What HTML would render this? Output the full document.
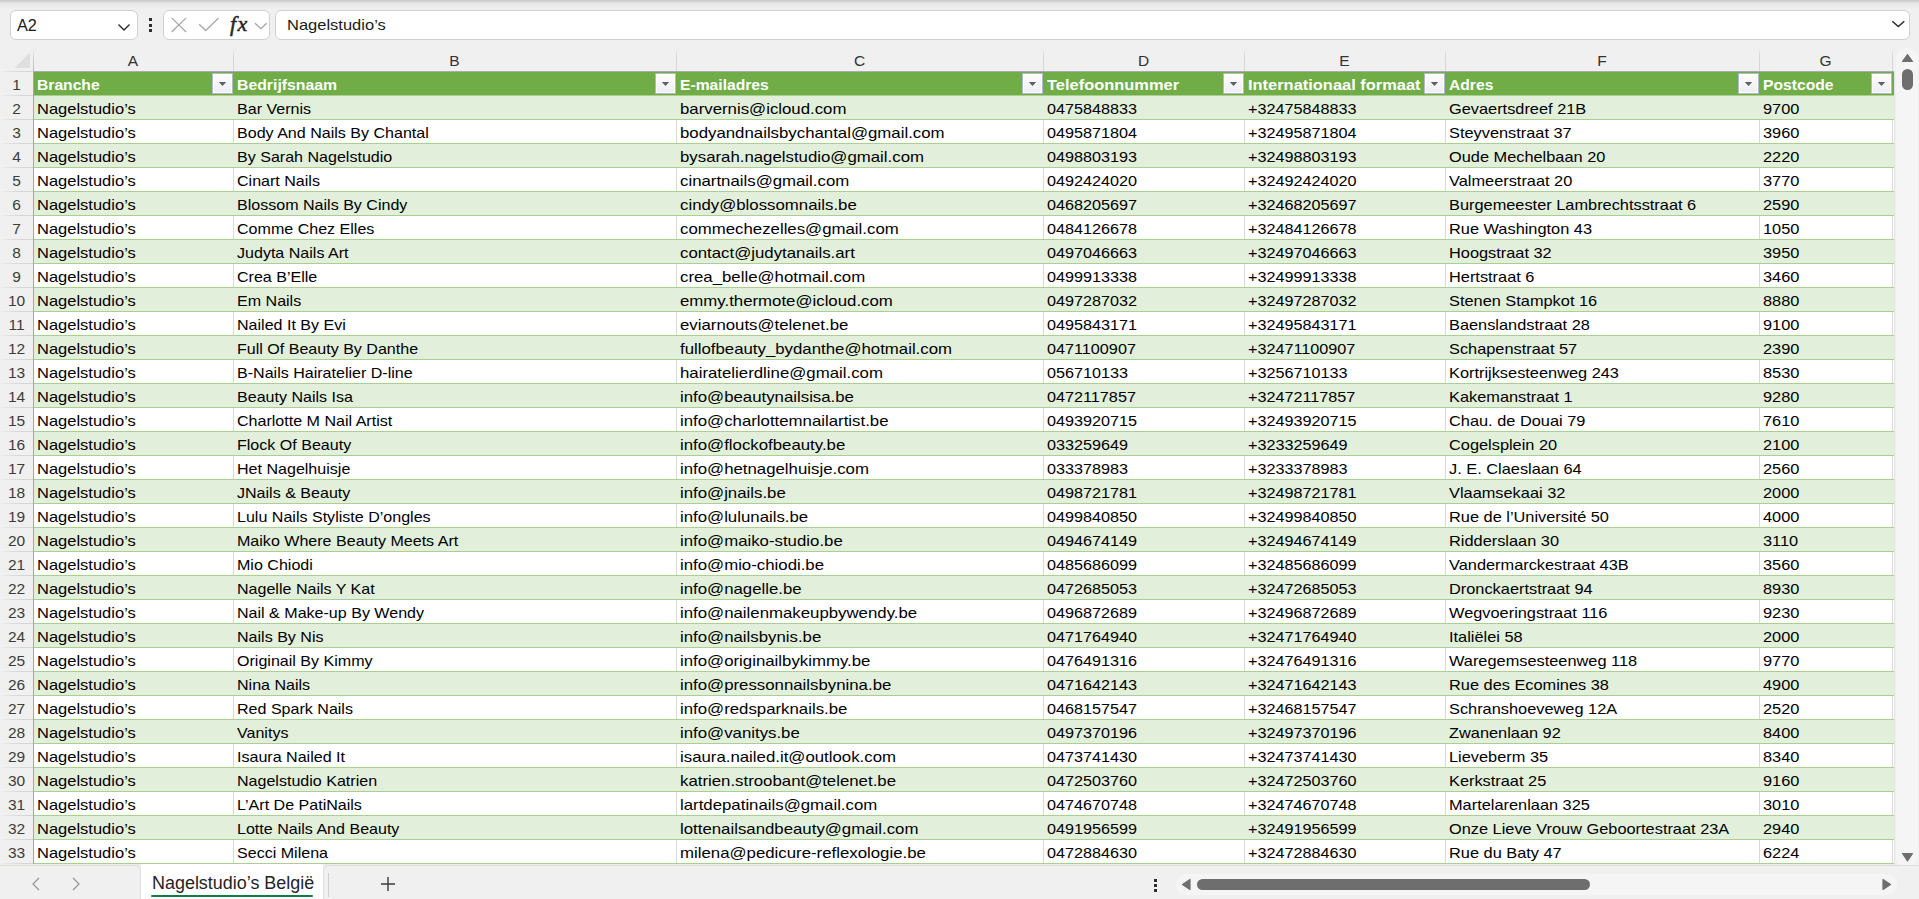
<!DOCTYPE html>
<html><head><meta charset="utf-8"><style>
*{margin:0;padding:0;box-sizing:border-box}
html,body{width:1919px;height:899px;overflow:hidden;background:#f0f0f0;font-family:"Liberation Sans",sans-serif;position:relative}
.a{position:absolute}
.t{position:absolute;white-space:nowrap;font-size:15px;line-height:24px;color:#000;transform-origin:0 0}
.hb{position:absolute;white-space:nowrap;font-size:15.5px;line-height:24px;color:#fff;font-weight:bold;transform-origin:0 0;transform:scaleX(1.06)}
.box{position:absolute;background:#fff;border:1px solid #d0d0d0;border-radius:6px}
.cl{position:absolute;font-size:15.5px;line-height:23px;color:#333;text-align:center}
.rn{position:absolute;left:0;width:33px;font-size:15.5px;line-height:24px;color:#3c3c3c;text-align:center}
.fb{position:absolute;width:21px;height:21px;border:1px solid #b6b6c6;background:linear-gradient(#fdfdfe,#eceef3);box-shadow:inset 0 0 0 1px #fff}
.fb svg{position:absolute;left:0;top:0}
.rs{position:absolute;left:0;width:33px;height:1px;background:linear-gradient(90deg,rgba(214,214,214,0),rgba(214,214,214,.6) 10px,#d6d6d6 22px)}
</style></head><body>

<div class="a" style="left:0;top:0;width:1919px;height:9px;background:linear-gradient(#c4c4c4,#e6e6e6 35%,#f0f0f0)"></div>
<div class="box" style="left:10px;top:10px;width:128px;height:30px"></div>
<div class="a" style="left:17px;top:13px;font-size:16.3px;line-height:24px;color:#1a1a1a">A2</div>
<svg class="a" style="left:116px;top:20px" width="16" height="14"><polyline points="2.5,4.5 8,10 13.5,4.5" fill="none" stroke="#2a2a2a" stroke-width="1.4"/></svg>
<div class="a" style="left:149px;top:18px;width:3px;height:3px;background:#2e2e2e"></div>
<div class="a" style="left:149px;top:23.5px;width:3px;height:3px;background:#2e2e2e"></div>
<div class="a" style="left:149px;top:29px;width:3px;height:3px;background:#2e2e2e"></div>
<div class="box" style="left:163px;top:10px;width:107px;height:30px"></div>
<svg class="a" style="left:163px;top:10px" width="107" height="30"><path d="M8.7 7.9 L23.1 22 M23.1 7.9 L8.7 22" stroke="#a6a6a6" stroke-width="1.3" fill="none"/><polyline points="36.2,14.2 42.7,20.5 55.7,7.9" stroke="#a6a6a6" stroke-width="1.3" fill="none"/><polyline points="92,13.3 98,18.7 103.6,13.3" stroke="#a0a0a0" stroke-width="1.2" fill="none"/></svg>
<div class="a" style="left:230px;top:10px;font-family:'Liberation Serif',serif;font-style:italic;font-size:22px;line-height:28px;color:#262626;-webkit-text-stroke:0.5px #262626;letter-spacing:1.5px">fx</div>
<div class="box" style="left:275px;top:10px;width:1635px;height:30px"></div>
<div class="a" style="left:287px;top:13px;font-size:15px;line-height:24px;color:#1a1a1a;transform-origin:0 0;transform:scaleX(1.10)">Nagelstudio’s</div>
<svg class="a" style="left:1890px;top:18px" width="16" height="12"><polyline points="2.3,3.2 8.3,8.6 14.3,3.2" fill="none" stroke="#2a2a2a" stroke-width="1.5"/></svg>
<svg class="a" style="left:0;top:48px" width="33" height="23"><polygon points="14.5,20 30,20 30,4.5" fill="#dfdfdf"/></svg>
<div class="cl" style="left:33px;top:49px;width:200px">A</div>
<div class="cl" style="left:233px;top:49px;width:443px">B</div>
<div class="cl" style="left:676px;top:49px;width:367px">C</div>
<div class="cl" style="left:1043px;top:49px;width:201px">D</div>
<div class="cl" style="left:1244px;top:49px;width:201px">E</div>
<div class="cl" style="left:1445px;top:49px;width:314px">F</div>
<div class="cl" style="left:1759px;top:49px;width:133px">G</div>
<div class="a" style="left:233px;top:48px;width:1px;height:23px;background:linear-gradient(rgba(214,214,214,0),#d6d6d6 8px)"></div>
<div class="a" style="left:676px;top:48px;width:1px;height:23px;background:linear-gradient(rgba(214,214,214,0),#d6d6d6 8px)"></div>
<div class="a" style="left:1043px;top:48px;width:1px;height:23px;background:linear-gradient(rgba(214,214,214,0),#d6d6d6 8px)"></div>
<div class="a" style="left:1244px;top:48px;width:1px;height:23px;background:linear-gradient(rgba(214,214,214,0),#d6d6d6 8px)"></div>
<div class="a" style="left:1445px;top:48px;width:1px;height:23px;background:linear-gradient(rgba(214,214,214,0),#d6d6d6 8px)"></div>
<div class="a" style="left:1759px;top:48px;width:1px;height:23px;background:linear-gradient(rgba(214,214,214,0),#d6d6d6 8px)"></div>
<div class="a" style="left:1892px;top:48px;width:1px;height:23px;background:linear-gradient(rgba(214,214,214,0),#d6d6d6 8px)"></div>
<div class="rs" style="top:71px"></div>
<div class="a" style="left:33px;top:71px;width:1861px;height:1px;background:#aaaab0"></div>
<div class="a" style="left:33px;top:48px;width:1px;height:24px;background:linear-gradient(rgba(200,200,200,0),#d0d0d0 10px,#b8b8b8)"></div>
<div class="a" style="left:33px;top:72px;width:1px;height:792px;background:#a6a6a6"></div>
<div class="a" style="left:34px;top:72px;width:1860px;height:24px;background:#70ad47"></div>
<div class="a" style="left:34px;top:95px;width:1860px;height:1px;background:#a9d08e"></div>
<div class="rs" style="top:95px"></div>
<div class="rn" style="top:73px">1</div>
<div class="hb" style="left:37px;top:73px;transform:scaleX(1.01)">Branche</div>
<div class="fb" style="left:212px;top:73px"><svg width="19" height="19"><polygon points="5.8,7.9 13.2,7.9 9.5,12.1" fill="#606060"/></svg></div>
<div class="hb" style="left:237px;top:73px;transform:scaleX(1.02)">Bedrijfsnaam</div>
<div class="fb" style="left:655px;top:73px"><svg width="19" height="19"><polygon points="5.8,7.9 13.2,7.9 9.5,12.1" fill="#606060"/></svg></div>
<div class="hb" style="left:680px;top:73px;transform:scaleX(1.01)">E-mailadres</div>
<div class="fb" style="left:1022px;top:73px"><svg width="19" height="19"><polygon points="5.8,7.9 13.2,7.9 9.5,12.1" fill="#606060"/></svg></div>
<div class="hb" style="left:1047px;top:73px;transform:scaleX(1.06)">Telefoonnummer</div>
<div class="fb" style="left:1223px;top:73px"><svg width="19" height="19"><polygon points="5.8,7.9 13.2,7.9 9.5,12.1" fill="#606060"/></svg></div>
<div class="hb" style="left:1248px;top:73px;transform:scaleX(1.06)">Internationaal formaat</div>
<div class="fb" style="left:1424px;top:73px"><svg width="19" height="19"><polygon points="5.8,7.9 13.2,7.9 9.5,12.1" fill="#606060"/></svg></div>
<div class="hb" style="left:1449px;top:73px;transform:scaleX(1.01)">Adres</div>
<div class="fb" style="left:1738px;top:73px"><svg width="19" height="19"><polygon points="5.8,7.9 13.2,7.9 9.5,12.1" fill="#606060"/></svg></div>
<div class="hb" style="left:1763px;top:73px;transform:scaleX(1.01)">Postcode</div>
<div class="fb" style="left:1871px;top:73px"><svg width="19" height="19"><polygon points="5.8,7.9 13.2,7.9 9.5,12.1" fill="#606060"/></svg></div>
<div class="a" style="left:34px;top:96px;width:1860px;height:24px;background:#e2efda"></div>
<div class="a" style="left:34px;top:119px;width:1860px;height:1px;background:#a9d08e"></div>
<div class="rs" style="top:119px"></div>
<div class="rn" style="top:97px">2</div>
<div class="t" style="left:37px;top:97px;font-size:15px;transform:scaleX(1.1000)">Nagelstudio’s</div>
<div class="t" style="left:237px;top:97px;font-size:15px;transform:scaleX(1.0700)">Bar Vernis</div>
<div class="t" style="left:680px;top:97px;font-size:15px;transform:scaleX(1.1200)">barvernis@icloud.com</div>
<div class="t" style="left:1047px;top:97px;font-size:15.5px;transform:scaleX(1.0452)">0475848833</div>
<div class="t" style="left:1248px;top:97px;font-size:15.5px;transform:scaleX(1.0452)">+32475848833</div>
<div class="t" style="left:1449px;top:97px;font-size:15px;transform:scaleX(1.0900)">Gevaertsdreef 21B</div>
<div class="t" style="left:1763px;top:97px;font-size:15.5px;transform:scaleX(1.0548)">9700</div>
<div class="a" style="left:34px;top:120px;width:1860px;height:24px;background:#ffffff"></div>
<div class="a" style="left:233px;top:120px;width:1px;height:24px;background:#d9d9d9"></div>
<div class="a" style="left:676px;top:120px;width:1px;height:24px;background:#d9d9d9"></div>
<div class="a" style="left:1043px;top:120px;width:1px;height:24px;background:#d9d9d9"></div>
<div class="a" style="left:1244px;top:120px;width:1px;height:24px;background:#d9d9d9"></div>
<div class="a" style="left:1445px;top:120px;width:1px;height:24px;background:#d9d9d9"></div>
<div class="a" style="left:1759px;top:120px;width:1px;height:24px;background:#d9d9d9"></div>
<div class="a" style="left:1892px;top:120px;width:1px;height:24px;background:#d9d9d9"></div>
<div class="a" style="left:34px;top:143px;width:1860px;height:1px;background:#a9d08e"></div>
<div class="rs" style="top:143px"></div>
<div class="rn" style="top:121px">3</div>
<div class="t" style="left:37px;top:121px;font-size:15px;transform:scaleX(1.1000)">Nagelstudio’s</div>
<div class="t" style="left:237px;top:121px;font-size:15px;transform:scaleX(1.0700)">Body And Nails By Chantal</div>
<div class="t" style="left:680px;top:121px;font-size:15px;transform:scaleX(1.1200)">bodyandnailsbychantal@gmail.com</div>
<div class="t" style="left:1047px;top:121px;font-size:15.5px;transform:scaleX(1.0452)">0495871804</div>
<div class="t" style="left:1248px;top:121px;font-size:15.5px;transform:scaleX(1.0452)">+32495871804</div>
<div class="t" style="left:1449px;top:121px;font-size:15px;transform:scaleX(1.0900)">Steyvenstraat 37</div>
<div class="t" style="left:1763px;top:121px;font-size:15.5px;transform:scaleX(1.0548)">3960</div>
<div class="a" style="left:34px;top:144px;width:1860px;height:24px;background:#e2efda"></div>
<div class="a" style="left:34px;top:167px;width:1860px;height:1px;background:#a9d08e"></div>
<div class="rs" style="top:167px"></div>
<div class="rn" style="top:145px">4</div>
<div class="t" style="left:37px;top:145px;font-size:15px;transform:scaleX(1.1000)">Nagelstudio’s</div>
<div class="t" style="left:237px;top:145px;font-size:15px;transform:scaleX(1.0700)">By Sarah Nagelstudio</div>
<div class="t" style="left:680px;top:145px;font-size:15px;transform:scaleX(1.1200)">bysarah.nagelstudio@gmail.com</div>
<div class="t" style="left:1047px;top:145px;font-size:15.5px;transform:scaleX(1.0452)">0498803193</div>
<div class="t" style="left:1248px;top:145px;font-size:15.5px;transform:scaleX(1.0452)">+32498803193</div>
<div class="t" style="left:1449px;top:145px;font-size:15px;transform:scaleX(1.0900)">Oude Mechelbaan 20</div>
<div class="t" style="left:1763px;top:145px;font-size:15.5px;transform:scaleX(1.0548)">2220</div>
<div class="a" style="left:34px;top:168px;width:1860px;height:24px;background:#ffffff"></div>
<div class="a" style="left:233px;top:168px;width:1px;height:24px;background:#d9d9d9"></div>
<div class="a" style="left:676px;top:168px;width:1px;height:24px;background:#d9d9d9"></div>
<div class="a" style="left:1043px;top:168px;width:1px;height:24px;background:#d9d9d9"></div>
<div class="a" style="left:1244px;top:168px;width:1px;height:24px;background:#d9d9d9"></div>
<div class="a" style="left:1445px;top:168px;width:1px;height:24px;background:#d9d9d9"></div>
<div class="a" style="left:1759px;top:168px;width:1px;height:24px;background:#d9d9d9"></div>
<div class="a" style="left:1892px;top:168px;width:1px;height:24px;background:#d9d9d9"></div>
<div class="a" style="left:34px;top:191px;width:1860px;height:1px;background:#a9d08e"></div>
<div class="rs" style="top:191px"></div>
<div class="rn" style="top:169px">5</div>
<div class="t" style="left:37px;top:169px;font-size:15px;transform:scaleX(1.1000)">Nagelstudio’s</div>
<div class="t" style="left:237px;top:169px;font-size:15px;transform:scaleX(1.0700)">Cinart Nails</div>
<div class="t" style="left:680px;top:169px;font-size:15px;transform:scaleX(1.1200)">cinartnails@gmail.com</div>
<div class="t" style="left:1047px;top:169px;font-size:15.5px;transform:scaleX(1.0452)">0492424020</div>
<div class="t" style="left:1248px;top:169px;font-size:15.5px;transform:scaleX(1.0452)">+32492424020</div>
<div class="t" style="left:1449px;top:169px;font-size:15px;transform:scaleX(1.0900)">Valmeerstraat 20</div>
<div class="t" style="left:1763px;top:169px;font-size:15.5px;transform:scaleX(1.0548)">3770</div>
<div class="a" style="left:34px;top:192px;width:1860px;height:24px;background:#e2efda"></div>
<div class="a" style="left:34px;top:215px;width:1860px;height:1px;background:#a9d08e"></div>
<div class="rs" style="top:215px"></div>
<div class="rn" style="top:193px">6</div>
<div class="t" style="left:37px;top:193px;font-size:15px;transform:scaleX(1.1000)">Nagelstudio’s</div>
<div class="t" style="left:237px;top:193px;font-size:15px;transform:scaleX(1.0700)">Blossom Nails By Cindy</div>
<div class="t" style="left:680px;top:193px;font-size:15px;transform:scaleX(1.1200)">cindy@blossomnails.be</div>
<div class="t" style="left:1047px;top:193px;font-size:15.5px;transform:scaleX(1.0452)">0468205697</div>
<div class="t" style="left:1248px;top:193px;font-size:15.5px;transform:scaleX(1.0452)">+32468205697</div>
<div class="t" style="left:1449px;top:193px;font-size:15px;transform:scaleX(1.0900)">Burgemeester Lambrechtsstraat 6</div>
<div class="t" style="left:1763px;top:193px;font-size:15.5px;transform:scaleX(1.0548)">2590</div>
<div class="a" style="left:34px;top:216px;width:1860px;height:24px;background:#ffffff"></div>
<div class="a" style="left:233px;top:216px;width:1px;height:24px;background:#d9d9d9"></div>
<div class="a" style="left:676px;top:216px;width:1px;height:24px;background:#d9d9d9"></div>
<div class="a" style="left:1043px;top:216px;width:1px;height:24px;background:#d9d9d9"></div>
<div class="a" style="left:1244px;top:216px;width:1px;height:24px;background:#d9d9d9"></div>
<div class="a" style="left:1445px;top:216px;width:1px;height:24px;background:#d9d9d9"></div>
<div class="a" style="left:1759px;top:216px;width:1px;height:24px;background:#d9d9d9"></div>
<div class="a" style="left:1892px;top:216px;width:1px;height:24px;background:#d9d9d9"></div>
<div class="a" style="left:34px;top:239px;width:1860px;height:1px;background:#a9d08e"></div>
<div class="rs" style="top:239px"></div>
<div class="rn" style="top:217px">7</div>
<div class="t" style="left:37px;top:217px;font-size:15px;transform:scaleX(1.1000)">Nagelstudio’s</div>
<div class="t" style="left:237px;top:217px;font-size:15px;transform:scaleX(1.0700)">Comme Chez Elles</div>
<div class="t" style="left:680px;top:217px;font-size:15px;transform:scaleX(1.1200)">commechezelles@gmail.com</div>
<div class="t" style="left:1047px;top:217px;font-size:15.5px;transform:scaleX(1.0452)">0484126678</div>
<div class="t" style="left:1248px;top:217px;font-size:15.5px;transform:scaleX(1.0452)">+32484126678</div>
<div class="t" style="left:1449px;top:217px;font-size:15px;transform:scaleX(1.0900)">Rue Washington 43</div>
<div class="t" style="left:1763px;top:217px;font-size:15.5px;transform:scaleX(1.0548)">1050</div>
<div class="a" style="left:34px;top:240px;width:1860px;height:24px;background:#e2efda"></div>
<div class="a" style="left:34px;top:263px;width:1860px;height:1px;background:#a9d08e"></div>
<div class="rs" style="top:263px"></div>
<div class="rn" style="top:241px">8</div>
<div class="t" style="left:37px;top:241px;font-size:15px;transform:scaleX(1.1000)">Nagelstudio’s</div>
<div class="t" style="left:237px;top:241px;font-size:15px;transform:scaleX(1.0700)">Judyta Nails Art</div>
<div class="t" style="left:680px;top:241px;font-size:15px;transform:scaleX(1.1200)">contact@judytanails.art</div>
<div class="t" style="left:1047px;top:241px;font-size:15.5px;transform:scaleX(1.0452)">0497046663</div>
<div class="t" style="left:1248px;top:241px;font-size:15.5px;transform:scaleX(1.0452)">+32497046663</div>
<div class="t" style="left:1449px;top:241px;font-size:15px;transform:scaleX(1.0900)">Hoogstraat 32</div>
<div class="t" style="left:1763px;top:241px;font-size:15.5px;transform:scaleX(1.0548)">3950</div>
<div class="a" style="left:34px;top:264px;width:1860px;height:24px;background:#ffffff"></div>
<div class="a" style="left:233px;top:264px;width:1px;height:24px;background:#d9d9d9"></div>
<div class="a" style="left:676px;top:264px;width:1px;height:24px;background:#d9d9d9"></div>
<div class="a" style="left:1043px;top:264px;width:1px;height:24px;background:#d9d9d9"></div>
<div class="a" style="left:1244px;top:264px;width:1px;height:24px;background:#d9d9d9"></div>
<div class="a" style="left:1445px;top:264px;width:1px;height:24px;background:#d9d9d9"></div>
<div class="a" style="left:1759px;top:264px;width:1px;height:24px;background:#d9d9d9"></div>
<div class="a" style="left:1892px;top:264px;width:1px;height:24px;background:#d9d9d9"></div>
<div class="a" style="left:34px;top:287px;width:1860px;height:1px;background:#a9d08e"></div>
<div class="rs" style="top:287px"></div>
<div class="rn" style="top:265px">9</div>
<div class="t" style="left:37px;top:265px;font-size:15px;transform:scaleX(1.1000)">Nagelstudio’s</div>
<div class="t" style="left:237px;top:265px;font-size:15px;transform:scaleX(1.0700)">Crea B’Elle</div>
<div class="t" style="left:680px;top:265px;font-size:15px;transform:scaleX(1.1200)">crea_belle@hotmail.com</div>
<div class="t" style="left:1047px;top:265px;font-size:15.5px;transform:scaleX(1.0452)">0499913338</div>
<div class="t" style="left:1248px;top:265px;font-size:15.5px;transform:scaleX(1.0452)">+32499913338</div>
<div class="t" style="left:1449px;top:265px;font-size:15px;transform:scaleX(1.0900)">Hertstraat 6</div>
<div class="t" style="left:1763px;top:265px;font-size:15.5px;transform:scaleX(1.0548)">3460</div>
<div class="a" style="left:34px;top:288px;width:1860px;height:24px;background:#e2efda"></div>
<div class="a" style="left:34px;top:311px;width:1860px;height:1px;background:#a9d08e"></div>
<div class="rs" style="top:311px"></div>
<div class="rn" style="top:289px">10</div>
<div class="t" style="left:37px;top:289px;font-size:15px;transform:scaleX(1.1000)">Nagelstudio’s</div>
<div class="t" style="left:237px;top:289px;font-size:15px;transform:scaleX(1.0700)">Em Nails</div>
<div class="t" style="left:680px;top:289px;font-size:15px;transform:scaleX(1.1200)">emmy.thermote@icloud.com</div>
<div class="t" style="left:1047px;top:289px;font-size:15.5px;transform:scaleX(1.0452)">0497287032</div>
<div class="t" style="left:1248px;top:289px;font-size:15.5px;transform:scaleX(1.0452)">+32497287032</div>
<div class="t" style="left:1449px;top:289px;font-size:15px;transform:scaleX(1.0900)">Stenen Stampkot 16</div>
<div class="t" style="left:1763px;top:289px;font-size:15.5px;transform:scaleX(1.0548)">8880</div>
<div class="a" style="left:34px;top:312px;width:1860px;height:24px;background:#ffffff"></div>
<div class="a" style="left:233px;top:312px;width:1px;height:24px;background:#d9d9d9"></div>
<div class="a" style="left:676px;top:312px;width:1px;height:24px;background:#d9d9d9"></div>
<div class="a" style="left:1043px;top:312px;width:1px;height:24px;background:#d9d9d9"></div>
<div class="a" style="left:1244px;top:312px;width:1px;height:24px;background:#d9d9d9"></div>
<div class="a" style="left:1445px;top:312px;width:1px;height:24px;background:#d9d9d9"></div>
<div class="a" style="left:1759px;top:312px;width:1px;height:24px;background:#d9d9d9"></div>
<div class="a" style="left:1892px;top:312px;width:1px;height:24px;background:#d9d9d9"></div>
<div class="a" style="left:34px;top:335px;width:1860px;height:1px;background:#a9d08e"></div>
<div class="rs" style="top:335px"></div>
<div class="rn" style="top:313px">11</div>
<div class="t" style="left:37px;top:313px;font-size:15px;transform:scaleX(1.1000)">Nagelstudio’s</div>
<div class="t" style="left:237px;top:313px;font-size:15px;transform:scaleX(1.0700)">Nailed It By Evi</div>
<div class="t" style="left:680px;top:313px;font-size:15px;transform:scaleX(1.1200)">eviarnouts@telenet.be</div>
<div class="t" style="left:1047px;top:313px;font-size:15.5px;transform:scaleX(1.0452)">0495843171</div>
<div class="t" style="left:1248px;top:313px;font-size:15.5px;transform:scaleX(1.0452)">+32495843171</div>
<div class="t" style="left:1449px;top:313px;font-size:15px;transform:scaleX(1.0900)">Baenslandstraat 28</div>
<div class="t" style="left:1763px;top:313px;font-size:15.5px;transform:scaleX(1.0548)">9100</div>
<div class="a" style="left:34px;top:336px;width:1860px;height:24px;background:#e2efda"></div>
<div class="a" style="left:34px;top:359px;width:1860px;height:1px;background:#a9d08e"></div>
<div class="rs" style="top:359px"></div>
<div class="rn" style="top:337px">12</div>
<div class="t" style="left:37px;top:337px;font-size:15px;transform:scaleX(1.1000)">Nagelstudio’s</div>
<div class="t" style="left:237px;top:337px;font-size:15px;transform:scaleX(1.0700)">Full Of Beauty By Danthe</div>
<div class="t" style="left:680px;top:337px;font-size:15px;transform:scaleX(1.1200)">fullofbeauty_bydanthe@hotmail.com</div>
<div class="t" style="left:1047px;top:337px;font-size:15.5px;transform:scaleX(1.0452)">0471100907</div>
<div class="t" style="left:1248px;top:337px;font-size:15.5px;transform:scaleX(1.0452)">+32471100907</div>
<div class="t" style="left:1449px;top:337px;font-size:15px;transform:scaleX(1.0900)">Schapenstraat 57</div>
<div class="t" style="left:1763px;top:337px;font-size:15.5px;transform:scaleX(1.0548)">2390</div>
<div class="a" style="left:34px;top:360px;width:1860px;height:24px;background:#ffffff"></div>
<div class="a" style="left:233px;top:360px;width:1px;height:24px;background:#d9d9d9"></div>
<div class="a" style="left:676px;top:360px;width:1px;height:24px;background:#d9d9d9"></div>
<div class="a" style="left:1043px;top:360px;width:1px;height:24px;background:#d9d9d9"></div>
<div class="a" style="left:1244px;top:360px;width:1px;height:24px;background:#d9d9d9"></div>
<div class="a" style="left:1445px;top:360px;width:1px;height:24px;background:#d9d9d9"></div>
<div class="a" style="left:1759px;top:360px;width:1px;height:24px;background:#d9d9d9"></div>
<div class="a" style="left:1892px;top:360px;width:1px;height:24px;background:#d9d9d9"></div>
<div class="a" style="left:34px;top:383px;width:1860px;height:1px;background:#a9d08e"></div>
<div class="rs" style="top:383px"></div>
<div class="rn" style="top:361px">13</div>
<div class="t" style="left:37px;top:361px;font-size:15px;transform:scaleX(1.1000)">Nagelstudio’s</div>
<div class="t" style="left:237px;top:361px;font-size:15px;transform:scaleX(1.0700)">B-Nails Hairatelier D-line</div>
<div class="t" style="left:680px;top:361px;font-size:15px;transform:scaleX(1.1200)">hairatelierdline@gmail.com</div>
<div class="t" style="left:1047px;top:361px;font-size:15.5px;transform:scaleX(1.0452)">056710133</div>
<div class="t" style="left:1248px;top:361px;font-size:15.5px;transform:scaleX(1.0452)">+3256710133</div>
<div class="t" style="left:1449px;top:361px;font-size:15px;transform:scaleX(1.0900)">Kortrijksesteenweg 243</div>
<div class="t" style="left:1763px;top:361px;font-size:15.5px;transform:scaleX(1.0548)">8530</div>
<div class="a" style="left:34px;top:384px;width:1860px;height:24px;background:#e2efda"></div>
<div class="a" style="left:34px;top:407px;width:1860px;height:1px;background:#a9d08e"></div>
<div class="rs" style="top:407px"></div>
<div class="rn" style="top:385px">14</div>
<div class="t" style="left:37px;top:385px;font-size:15px;transform:scaleX(1.1000)">Nagelstudio’s</div>
<div class="t" style="left:237px;top:385px;font-size:15px;transform:scaleX(1.0700)">Beauty Nails Isa</div>
<div class="t" style="left:680px;top:385px;font-size:15px;transform:scaleX(1.1200)">info@beautynailsisa.be</div>
<div class="t" style="left:1047px;top:385px;font-size:15.5px;transform:scaleX(1.0452)">0472117857</div>
<div class="t" style="left:1248px;top:385px;font-size:15.5px;transform:scaleX(1.0452)">+32472117857</div>
<div class="t" style="left:1449px;top:385px;font-size:15px;transform:scaleX(1.0900)">Kakemanstraat 1</div>
<div class="t" style="left:1763px;top:385px;font-size:15.5px;transform:scaleX(1.0548)">9280</div>
<div class="a" style="left:34px;top:408px;width:1860px;height:24px;background:#ffffff"></div>
<div class="a" style="left:233px;top:408px;width:1px;height:24px;background:#d9d9d9"></div>
<div class="a" style="left:676px;top:408px;width:1px;height:24px;background:#d9d9d9"></div>
<div class="a" style="left:1043px;top:408px;width:1px;height:24px;background:#d9d9d9"></div>
<div class="a" style="left:1244px;top:408px;width:1px;height:24px;background:#d9d9d9"></div>
<div class="a" style="left:1445px;top:408px;width:1px;height:24px;background:#d9d9d9"></div>
<div class="a" style="left:1759px;top:408px;width:1px;height:24px;background:#d9d9d9"></div>
<div class="a" style="left:1892px;top:408px;width:1px;height:24px;background:#d9d9d9"></div>
<div class="a" style="left:34px;top:431px;width:1860px;height:1px;background:#a9d08e"></div>
<div class="rs" style="top:431px"></div>
<div class="rn" style="top:409px">15</div>
<div class="t" style="left:37px;top:409px;font-size:15px;transform:scaleX(1.1000)">Nagelstudio’s</div>
<div class="t" style="left:237px;top:409px;font-size:15px;transform:scaleX(1.0700)">Charlotte M Nail Artist</div>
<div class="t" style="left:680px;top:409px;font-size:15px;transform:scaleX(1.1200)">info@charlottemnailartist.be</div>
<div class="t" style="left:1047px;top:409px;font-size:15.5px;transform:scaleX(1.0452)">0493920715</div>
<div class="t" style="left:1248px;top:409px;font-size:15.5px;transform:scaleX(1.0452)">+32493920715</div>
<div class="t" style="left:1449px;top:409px;font-size:15px;transform:scaleX(1.0900)">Chau. de Douai 79</div>
<div class="t" style="left:1763px;top:409px;font-size:15.5px;transform:scaleX(1.0548)">7610</div>
<div class="a" style="left:34px;top:432px;width:1860px;height:24px;background:#e2efda"></div>
<div class="a" style="left:34px;top:455px;width:1860px;height:1px;background:#a9d08e"></div>
<div class="rs" style="top:455px"></div>
<div class="rn" style="top:433px">16</div>
<div class="t" style="left:37px;top:433px;font-size:15px;transform:scaleX(1.1000)">Nagelstudio’s</div>
<div class="t" style="left:237px;top:433px;font-size:15px;transform:scaleX(1.0700)">Flock Of Beauty</div>
<div class="t" style="left:680px;top:433px;font-size:15px;transform:scaleX(1.1200)">info@flockofbeauty.be</div>
<div class="t" style="left:1047px;top:433px;font-size:15.5px;transform:scaleX(1.0452)">033259649</div>
<div class="t" style="left:1248px;top:433px;font-size:15.5px;transform:scaleX(1.0452)">+3233259649</div>
<div class="t" style="left:1449px;top:433px;font-size:15px;transform:scaleX(1.0900)">Cogelsplein 20</div>
<div class="t" style="left:1763px;top:433px;font-size:15.5px;transform:scaleX(1.0548)">2100</div>
<div class="a" style="left:34px;top:456px;width:1860px;height:24px;background:#ffffff"></div>
<div class="a" style="left:233px;top:456px;width:1px;height:24px;background:#d9d9d9"></div>
<div class="a" style="left:676px;top:456px;width:1px;height:24px;background:#d9d9d9"></div>
<div class="a" style="left:1043px;top:456px;width:1px;height:24px;background:#d9d9d9"></div>
<div class="a" style="left:1244px;top:456px;width:1px;height:24px;background:#d9d9d9"></div>
<div class="a" style="left:1445px;top:456px;width:1px;height:24px;background:#d9d9d9"></div>
<div class="a" style="left:1759px;top:456px;width:1px;height:24px;background:#d9d9d9"></div>
<div class="a" style="left:1892px;top:456px;width:1px;height:24px;background:#d9d9d9"></div>
<div class="a" style="left:34px;top:479px;width:1860px;height:1px;background:#a9d08e"></div>
<div class="rs" style="top:479px"></div>
<div class="rn" style="top:457px">17</div>
<div class="t" style="left:37px;top:457px;font-size:15px;transform:scaleX(1.1000)">Nagelstudio’s</div>
<div class="t" style="left:237px;top:457px;font-size:15px;transform:scaleX(1.0700)">Het Nagelhuisje</div>
<div class="t" style="left:680px;top:457px;font-size:15px;transform:scaleX(1.1200)">info@hetnagelhuisje.com</div>
<div class="t" style="left:1047px;top:457px;font-size:15.5px;transform:scaleX(1.0452)">033378983</div>
<div class="t" style="left:1248px;top:457px;font-size:15.5px;transform:scaleX(1.0452)">+3233378983</div>
<div class="t" style="left:1449px;top:457px;font-size:15px;transform:scaleX(1.0900)">J. E. Claeslaan 64</div>
<div class="t" style="left:1763px;top:457px;font-size:15.5px;transform:scaleX(1.0548)">2560</div>
<div class="a" style="left:34px;top:480px;width:1860px;height:24px;background:#e2efda"></div>
<div class="a" style="left:34px;top:503px;width:1860px;height:1px;background:#a9d08e"></div>
<div class="rs" style="top:503px"></div>
<div class="rn" style="top:481px">18</div>
<div class="t" style="left:37px;top:481px;font-size:15px;transform:scaleX(1.1000)">Nagelstudio’s</div>
<div class="t" style="left:237px;top:481px;font-size:15px;transform:scaleX(1.0700)">JNails &amp; Beauty</div>
<div class="t" style="left:680px;top:481px;font-size:15px;transform:scaleX(1.1200)">info@jnails.be</div>
<div class="t" style="left:1047px;top:481px;font-size:15.5px;transform:scaleX(1.0452)">0498721781</div>
<div class="t" style="left:1248px;top:481px;font-size:15.5px;transform:scaleX(1.0452)">+32498721781</div>
<div class="t" style="left:1449px;top:481px;font-size:15px;transform:scaleX(1.0900)">Vlaamsekaai 32</div>
<div class="t" style="left:1763px;top:481px;font-size:15.5px;transform:scaleX(1.0548)">2000</div>
<div class="a" style="left:34px;top:504px;width:1860px;height:24px;background:#ffffff"></div>
<div class="a" style="left:233px;top:504px;width:1px;height:24px;background:#d9d9d9"></div>
<div class="a" style="left:676px;top:504px;width:1px;height:24px;background:#d9d9d9"></div>
<div class="a" style="left:1043px;top:504px;width:1px;height:24px;background:#d9d9d9"></div>
<div class="a" style="left:1244px;top:504px;width:1px;height:24px;background:#d9d9d9"></div>
<div class="a" style="left:1445px;top:504px;width:1px;height:24px;background:#d9d9d9"></div>
<div class="a" style="left:1759px;top:504px;width:1px;height:24px;background:#d9d9d9"></div>
<div class="a" style="left:1892px;top:504px;width:1px;height:24px;background:#d9d9d9"></div>
<div class="a" style="left:34px;top:527px;width:1860px;height:1px;background:#a9d08e"></div>
<div class="rs" style="top:527px"></div>
<div class="rn" style="top:505px">19</div>
<div class="t" style="left:37px;top:505px;font-size:15px;transform:scaleX(1.1000)">Nagelstudio’s</div>
<div class="t" style="left:237px;top:505px;font-size:15px;transform:scaleX(1.0700)">Lulu Nails Styliste D’ongles</div>
<div class="t" style="left:680px;top:505px;font-size:15px;transform:scaleX(1.1200)">info@lulunails.be</div>
<div class="t" style="left:1047px;top:505px;font-size:15.5px;transform:scaleX(1.0452)">0499840850</div>
<div class="t" style="left:1248px;top:505px;font-size:15.5px;transform:scaleX(1.0452)">+32499840850</div>
<div class="t" style="left:1449px;top:505px;font-size:15px;transform:scaleX(1.0900)">Rue de l’Université 50</div>
<div class="t" style="left:1763px;top:505px;font-size:15.5px;transform:scaleX(1.0548)">4000</div>
<div class="a" style="left:34px;top:528px;width:1860px;height:24px;background:#e2efda"></div>
<div class="a" style="left:34px;top:551px;width:1860px;height:1px;background:#a9d08e"></div>
<div class="rs" style="top:551px"></div>
<div class="rn" style="top:529px">20</div>
<div class="t" style="left:37px;top:529px;font-size:15px;transform:scaleX(1.1000)">Nagelstudio’s</div>
<div class="t" style="left:237px;top:529px;font-size:15px;transform:scaleX(1.0700)">Maiko Where Beauty Meets Art</div>
<div class="t" style="left:680px;top:529px;font-size:15px;transform:scaleX(1.1200)">info@maiko-studio.be</div>
<div class="t" style="left:1047px;top:529px;font-size:15.5px;transform:scaleX(1.0452)">0494674149</div>
<div class="t" style="left:1248px;top:529px;font-size:15.5px;transform:scaleX(1.0452)">+32494674149</div>
<div class="t" style="left:1449px;top:529px;font-size:15px;transform:scaleX(1.0900)">Ridderslaan 30</div>
<div class="t" style="left:1763px;top:529px;font-size:15.5px;transform:scaleX(1.0548)">3110</div>
<div class="a" style="left:34px;top:552px;width:1860px;height:24px;background:#ffffff"></div>
<div class="a" style="left:233px;top:552px;width:1px;height:24px;background:#d9d9d9"></div>
<div class="a" style="left:676px;top:552px;width:1px;height:24px;background:#d9d9d9"></div>
<div class="a" style="left:1043px;top:552px;width:1px;height:24px;background:#d9d9d9"></div>
<div class="a" style="left:1244px;top:552px;width:1px;height:24px;background:#d9d9d9"></div>
<div class="a" style="left:1445px;top:552px;width:1px;height:24px;background:#d9d9d9"></div>
<div class="a" style="left:1759px;top:552px;width:1px;height:24px;background:#d9d9d9"></div>
<div class="a" style="left:1892px;top:552px;width:1px;height:24px;background:#d9d9d9"></div>
<div class="a" style="left:34px;top:575px;width:1860px;height:1px;background:#a9d08e"></div>
<div class="rs" style="top:575px"></div>
<div class="rn" style="top:553px">21</div>
<div class="t" style="left:37px;top:553px;font-size:15px;transform:scaleX(1.1000)">Nagelstudio’s</div>
<div class="t" style="left:237px;top:553px;font-size:15px;transform:scaleX(1.0700)">Mio Chiodi</div>
<div class="t" style="left:680px;top:553px;font-size:15px;transform:scaleX(1.1200)">info@mio-chiodi.be</div>
<div class="t" style="left:1047px;top:553px;font-size:15.5px;transform:scaleX(1.0452)">0485686099</div>
<div class="t" style="left:1248px;top:553px;font-size:15.5px;transform:scaleX(1.0452)">+32485686099</div>
<div class="t" style="left:1449px;top:553px;font-size:15px;transform:scaleX(1.0900)">Vandermarckestraat 43B</div>
<div class="t" style="left:1763px;top:553px;font-size:15.5px;transform:scaleX(1.0548)">3560</div>
<div class="a" style="left:34px;top:576px;width:1860px;height:24px;background:#e2efda"></div>
<div class="a" style="left:34px;top:599px;width:1860px;height:1px;background:#a9d08e"></div>
<div class="rs" style="top:599px"></div>
<div class="rn" style="top:577px">22</div>
<div class="t" style="left:37px;top:577px;font-size:15px;transform:scaleX(1.1000)">Nagelstudio’s</div>
<div class="t" style="left:237px;top:577px;font-size:15px;transform:scaleX(1.0700)">Nagelle Nails Y Kat</div>
<div class="t" style="left:680px;top:577px;font-size:15px;transform:scaleX(1.1200)">info@nagelle.be</div>
<div class="t" style="left:1047px;top:577px;font-size:15.5px;transform:scaleX(1.0452)">0472685053</div>
<div class="t" style="left:1248px;top:577px;font-size:15.5px;transform:scaleX(1.0452)">+32472685053</div>
<div class="t" style="left:1449px;top:577px;font-size:15px;transform:scaleX(1.0900)">Dronckaertstraat 94</div>
<div class="t" style="left:1763px;top:577px;font-size:15.5px;transform:scaleX(1.0548)">8930</div>
<div class="a" style="left:34px;top:600px;width:1860px;height:24px;background:#ffffff"></div>
<div class="a" style="left:233px;top:600px;width:1px;height:24px;background:#d9d9d9"></div>
<div class="a" style="left:676px;top:600px;width:1px;height:24px;background:#d9d9d9"></div>
<div class="a" style="left:1043px;top:600px;width:1px;height:24px;background:#d9d9d9"></div>
<div class="a" style="left:1244px;top:600px;width:1px;height:24px;background:#d9d9d9"></div>
<div class="a" style="left:1445px;top:600px;width:1px;height:24px;background:#d9d9d9"></div>
<div class="a" style="left:1759px;top:600px;width:1px;height:24px;background:#d9d9d9"></div>
<div class="a" style="left:1892px;top:600px;width:1px;height:24px;background:#d9d9d9"></div>
<div class="a" style="left:34px;top:623px;width:1860px;height:1px;background:#a9d08e"></div>
<div class="rs" style="top:623px"></div>
<div class="rn" style="top:601px">23</div>
<div class="t" style="left:37px;top:601px;font-size:15px;transform:scaleX(1.1000)">Nagelstudio’s</div>
<div class="t" style="left:237px;top:601px;font-size:15px;transform:scaleX(1.0700)">Nail &amp; Make-up By Wendy</div>
<div class="t" style="left:680px;top:601px;font-size:15px;transform:scaleX(1.1200)">info@nailenmakeupbywendy.be</div>
<div class="t" style="left:1047px;top:601px;font-size:15.5px;transform:scaleX(1.0452)">0496872689</div>
<div class="t" style="left:1248px;top:601px;font-size:15.5px;transform:scaleX(1.0452)">+32496872689</div>
<div class="t" style="left:1449px;top:601px;font-size:15px;transform:scaleX(1.0900)">Wegvoeringstraat 116</div>
<div class="t" style="left:1763px;top:601px;font-size:15.5px;transform:scaleX(1.0548)">9230</div>
<div class="a" style="left:34px;top:624px;width:1860px;height:24px;background:#e2efda"></div>
<div class="a" style="left:34px;top:647px;width:1860px;height:1px;background:#a9d08e"></div>
<div class="rs" style="top:647px"></div>
<div class="rn" style="top:625px">24</div>
<div class="t" style="left:37px;top:625px;font-size:15px;transform:scaleX(1.1000)">Nagelstudio’s</div>
<div class="t" style="left:237px;top:625px;font-size:15px;transform:scaleX(1.0700)">Nails By Nis</div>
<div class="t" style="left:680px;top:625px;font-size:15px;transform:scaleX(1.1200)">info@nailsbynis.be</div>
<div class="t" style="left:1047px;top:625px;font-size:15.5px;transform:scaleX(1.0452)">0471764940</div>
<div class="t" style="left:1248px;top:625px;font-size:15.5px;transform:scaleX(1.0452)">+32471764940</div>
<div class="t" style="left:1449px;top:625px;font-size:15px;transform:scaleX(1.0900)">Italiëlei 58</div>
<div class="t" style="left:1763px;top:625px;font-size:15.5px;transform:scaleX(1.0548)">2000</div>
<div class="a" style="left:34px;top:648px;width:1860px;height:24px;background:#ffffff"></div>
<div class="a" style="left:233px;top:648px;width:1px;height:24px;background:#d9d9d9"></div>
<div class="a" style="left:676px;top:648px;width:1px;height:24px;background:#d9d9d9"></div>
<div class="a" style="left:1043px;top:648px;width:1px;height:24px;background:#d9d9d9"></div>
<div class="a" style="left:1244px;top:648px;width:1px;height:24px;background:#d9d9d9"></div>
<div class="a" style="left:1445px;top:648px;width:1px;height:24px;background:#d9d9d9"></div>
<div class="a" style="left:1759px;top:648px;width:1px;height:24px;background:#d9d9d9"></div>
<div class="a" style="left:1892px;top:648px;width:1px;height:24px;background:#d9d9d9"></div>
<div class="a" style="left:34px;top:671px;width:1860px;height:1px;background:#a9d08e"></div>
<div class="rs" style="top:671px"></div>
<div class="rn" style="top:649px">25</div>
<div class="t" style="left:37px;top:649px;font-size:15px;transform:scaleX(1.1000)">Nagelstudio’s</div>
<div class="t" style="left:237px;top:649px;font-size:15px;transform:scaleX(1.0700)">Originail By Kimmy</div>
<div class="t" style="left:680px;top:649px;font-size:15px;transform:scaleX(1.1200)">info@originailbykimmy.be</div>
<div class="t" style="left:1047px;top:649px;font-size:15.5px;transform:scaleX(1.0452)">0476491316</div>
<div class="t" style="left:1248px;top:649px;font-size:15.5px;transform:scaleX(1.0452)">+32476491316</div>
<div class="t" style="left:1449px;top:649px;font-size:15px;transform:scaleX(1.0900)">Waregemsesteenweg 118</div>
<div class="t" style="left:1763px;top:649px;font-size:15.5px;transform:scaleX(1.0548)">9770</div>
<div class="a" style="left:34px;top:672px;width:1860px;height:24px;background:#e2efda"></div>
<div class="a" style="left:34px;top:695px;width:1860px;height:1px;background:#a9d08e"></div>
<div class="rs" style="top:695px"></div>
<div class="rn" style="top:673px">26</div>
<div class="t" style="left:37px;top:673px;font-size:15px;transform:scaleX(1.1000)">Nagelstudio’s</div>
<div class="t" style="left:237px;top:673px;font-size:15px;transform:scaleX(1.0700)">Nina Nails</div>
<div class="t" style="left:680px;top:673px;font-size:15px;transform:scaleX(1.1200)">info@pressonnailsbynina.be</div>
<div class="t" style="left:1047px;top:673px;font-size:15.5px;transform:scaleX(1.0452)">0471642143</div>
<div class="t" style="left:1248px;top:673px;font-size:15.5px;transform:scaleX(1.0452)">+32471642143</div>
<div class="t" style="left:1449px;top:673px;font-size:15px;transform:scaleX(1.0900)">Rue des Ecomines 38</div>
<div class="t" style="left:1763px;top:673px;font-size:15.5px;transform:scaleX(1.0548)">4900</div>
<div class="a" style="left:34px;top:696px;width:1860px;height:24px;background:#ffffff"></div>
<div class="a" style="left:233px;top:696px;width:1px;height:24px;background:#d9d9d9"></div>
<div class="a" style="left:676px;top:696px;width:1px;height:24px;background:#d9d9d9"></div>
<div class="a" style="left:1043px;top:696px;width:1px;height:24px;background:#d9d9d9"></div>
<div class="a" style="left:1244px;top:696px;width:1px;height:24px;background:#d9d9d9"></div>
<div class="a" style="left:1445px;top:696px;width:1px;height:24px;background:#d9d9d9"></div>
<div class="a" style="left:1759px;top:696px;width:1px;height:24px;background:#d9d9d9"></div>
<div class="a" style="left:1892px;top:696px;width:1px;height:24px;background:#d9d9d9"></div>
<div class="a" style="left:34px;top:719px;width:1860px;height:1px;background:#a9d08e"></div>
<div class="rs" style="top:719px"></div>
<div class="rn" style="top:697px">27</div>
<div class="t" style="left:37px;top:697px;font-size:15px;transform:scaleX(1.1000)">Nagelstudio’s</div>
<div class="t" style="left:237px;top:697px;font-size:15px;transform:scaleX(1.0700)">Red Spark Nails</div>
<div class="t" style="left:680px;top:697px;font-size:15px;transform:scaleX(1.1200)">info@redsparknails.be</div>
<div class="t" style="left:1047px;top:697px;font-size:15.5px;transform:scaleX(1.0452)">0468157547</div>
<div class="t" style="left:1248px;top:697px;font-size:15.5px;transform:scaleX(1.0452)">+32468157547</div>
<div class="t" style="left:1449px;top:697px;font-size:15px;transform:scaleX(1.0900)">Schranshoeveweg 12A</div>
<div class="t" style="left:1763px;top:697px;font-size:15.5px;transform:scaleX(1.0548)">2520</div>
<div class="a" style="left:34px;top:720px;width:1860px;height:24px;background:#e2efda"></div>
<div class="a" style="left:34px;top:743px;width:1860px;height:1px;background:#a9d08e"></div>
<div class="rs" style="top:743px"></div>
<div class="rn" style="top:721px">28</div>
<div class="t" style="left:37px;top:721px;font-size:15px;transform:scaleX(1.1000)">Nagelstudio’s</div>
<div class="t" style="left:237px;top:721px;font-size:15px;transform:scaleX(1.0700)">Vanitys</div>
<div class="t" style="left:680px;top:721px;font-size:15px;transform:scaleX(1.1200)">info@vanitys.be</div>
<div class="t" style="left:1047px;top:721px;font-size:15.5px;transform:scaleX(1.0452)">0497370196</div>
<div class="t" style="left:1248px;top:721px;font-size:15.5px;transform:scaleX(1.0452)">+32497370196</div>
<div class="t" style="left:1449px;top:721px;font-size:15px;transform:scaleX(1.0900)">Zwanenlaan 92</div>
<div class="t" style="left:1763px;top:721px;font-size:15.5px;transform:scaleX(1.0548)">8400</div>
<div class="a" style="left:34px;top:744px;width:1860px;height:24px;background:#ffffff"></div>
<div class="a" style="left:233px;top:744px;width:1px;height:24px;background:#d9d9d9"></div>
<div class="a" style="left:676px;top:744px;width:1px;height:24px;background:#d9d9d9"></div>
<div class="a" style="left:1043px;top:744px;width:1px;height:24px;background:#d9d9d9"></div>
<div class="a" style="left:1244px;top:744px;width:1px;height:24px;background:#d9d9d9"></div>
<div class="a" style="left:1445px;top:744px;width:1px;height:24px;background:#d9d9d9"></div>
<div class="a" style="left:1759px;top:744px;width:1px;height:24px;background:#d9d9d9"></div>
<div class="a" style="left:1892px;top:744px;width:1px;height:24px;background:#d9d9d9"></div>
<div class="a" style="left:34px;top:767px;width:1860px;height:1px;background:#a9d08e"></div>
<div class="rs" style="top:767px"></div>
<div class="rn" style="top:745px">29</div>
<div class="t" style="left:37px;top:745px;font-size:15px;transform:scaleX(1.1000)">Nagelstudio’s</div>
<div class="t" style="left:237px;top:745px;font-size:15px;transform:scaleX(1.0700)">Isaura Nailed It</div>
<div class="t" style="left:680px;top:745px;font-size:15px;transform:scaleX(1.1200)">isaura.nailed.it@outlook.com</div>
<div class="t" style="left:1047px;top:745px;font-size:15.5px;transform:scaleX(1.0452)">0473741430</div>
<div class="t" style="left:1248px;top:745px;font-size:15.5px;transform:scaleX(1.0452)">+32473741430</div>
<div class="t" style="left:1449px;top:745px;font-size:15px;transform:scaleX(1.0900)">Lieveberm 35</div>
<div class="t" style="left:1763px;top:745px;font-size:15.5px;transform:scaleX(1.0548)">8340</div>
<div class="a" style="left:34px;top:768px;width:1860px;height:24px;background:#e2efda"></div>
<div class="a" style="left:34px;top:791px;width:1860px;height:1px;background:#a9d08e"></div>
<div class="rs" style="top:791px"></div>
<div class="rn" style="top:769px">30</div>
<div class="t" style="left:37px;top:769px;font-size:15px;transform:scaleX(1.1000)">Nagelstudio’s</div>
<div class="t" style="left:237px;top:769px;font-size:15px;transform:scaleX(1.0700)">Nagelstudio Katrien</div>
<div class="t" style="left:680px;top:769px;font-size:15px;transform:scaleX(1.1200)">katrien.stroobant@telenet.be</div>
<div class="t" style="left:1047px;top:769px;font-size:15.5px;transform:scaleX(1.0452)">0472503760</div>
<div class="t" style="left:1248px;top:769px;font-size:15.5px;transform:scaleX(1.0452)">+32472503760</div>
<div class="t" style="left:1449px;top:769px;font-size:15px;transform:scaleX(1.0900)">Kerkstraat 25</div>
<div class="t" style="left:1763px;top:769px;font-size:15.5px;transform:scaleX(1.0548)">9160</div>
<div class="a" style="left:34px;top:792px;width:1860px;height:24px;background:#ffffff"></div>
<div class="a" style="left:233px;top:792px;width:1px;height:24px;background:#d9d9d9"></div>
<div class="a" style="left:676px;top:792px;width:1px;height:24px;background:#d9d9d9"></div>
<div class="a" style="left:1043px;top:792px;width:1px;height:24px;background:#d9d9d9"></div>
<div class="a" style="left:1244px;top:792px;width:1px;height:24px;background:#d9d9d9"></div>
<div class="a" style="left:1445px;top:792px;width:1px;height:24px;background:#d9d9d9"></div>
<div class="a" style="left:1759px;top:792px;width:1px;height:24px;background:#d9d9d9"></div>
<div class="a" style="left:1892px;top:792px;width:1px;height:24px;background:#d9d9d9"></div>
<div class="a" style="left:34px;top:815px;width:1860px;height:1px;background:#a9d08e"></div>
<div class="rs" style="top:815px"></div>
<div class="rn" style="top:793px">31</div>
<div class="t" style="left:37px;top:793px;font-size:15px;transform:scaleX(1.1000)">Nagelstudio’s</div>
<div class="t" style="left:237px;top:793px;font-size:15px;transform:scaleX(1.0700)">L’Art De PatiNails</div>
<div class="t" style="left:680px;top:793px;font-size:15px;transform:scaleX(1.1200)">lartdepatinails@gmail.com</div>
<div class="t" style="left:1047px;top:793px;font-size:15.5px;transform:scaleX(1.0452)">0474670748</div>
<div class="t" style="left:1248px;top:793px;font-size:15.5px;transform:scaleX(1.0452)">+32474670748</div>
<div class="t" style="left:1449px;top:793px;font-size:15px;transform:scaleX(1.0900)">Martelarenlaan 325</div>
<div class="t" style="left:1763px;top:793px;font-size:15.5px;transform:scaleX(1.0548)">3010</div>
<div class="a" style="left:34px;top:816px;width:1860px;height:24px;background:#e2efda"></div>
<div class="a" style="left:34px;top:839px;width:1860px;height:1px;background:#a9d08e"></div>
<div class="rs" style="top:839px"></div>
<div class="rn" style="top:817px">32</div>
<div class="t" style="left:37px;top:817px;font-size:15px;transform:scaleX(1.1000)">Nagelstudio’s</div>
<div class="t" style="left:237px;top:817px;font-size:15px;transform:scaleX(1.0700)">Lotte Nails And Beauty</div>
<div class="t" style="left:680px;top:817px;font-size:15px;transform:scaleX(1.1200)">lottenailsandbeauty@gmail.com</div>
<div class="t" style="left:1047px;top:817px;font-size:15.5px;transform:scaleX(1.0452)">0491956599</div>
<div class="t" style="left:1248px;top:817px;font-size:15.5px;transform:scaleX(1.0452)">+32491956599</div>
<div class="t" style="left:1449px;top:817px;font-size:15px;transform:scaleX(1.0900)">Onze Lieve Vrouw Geboortestraat 23A</div>
<div class="t" style="left:1763px;top:817px;font-size:15.5px;transform:scaleX(1.0548)">2940</div>
<div class="a" style="left:34px;top:840px;width:1860px;height:24px;background:#ffffff"></div>
<div class="a" style="left:233px;top:840px;width:1px;height:24px;background:#d9d9d9"></div>
<div class="a" style="left:676px;top:840px;width:1px;height:24px;background:#d9d9d9"></div>
<div class="a" style="left:1043px;top:840px;width:1px;height:24px;background:#d9d9d9"></div>
<div class="a" style="left:1244px;top:840px;width:1px;height:24px;background:#d9d9d9"></div>
<div class="a" style="left:1445px;top:840px;width:1px;height:24px;background:#d9d9d9"></div>
<div class="a" style="left:1759px;top:840px;width:1px;height:24px;background:#d9d9d9"></div>
<div class="a" style="left:1892px;top:840px;width:1px;height:24px;background:#d9d9d9"></div>
<div class="a" style="left:34px;top:863px;width:1860px;height:1px;background:#a9d08e"></div>
<div class="rs" style="top:863px"></div>
<div class="rn" style="top:841px">33</div>
<div class="t" style="left:37px;top:841px;font-size:15px;transform:scaleX(1.1000)">Nagelstudio’s</div>
<div class="t" style="left:237px;top:841px;font-size:15px;transform:scaleX(1.0700)">Secci Milena</div>
<div class="t" style="left:680px;top:841px;font-size:15px;transform:scaleX(1.1200)">milena@pedicure-reflexologie.be</div>
<div class="t" style="left:1047px;top:841px;font-size:15.5px;transform:scaleX(1.0452)">0472884630</div>
<div class="t" style="left:1248px;top:841px;font-size:15.5px;transform:scaleX(1.0452)">+32472884630</div>
<div class="t" style="left:1449px;top:841px;font-size:15px;transform:scaleX(1.0900)">Rue du Baty 47</div>
<div class="t" style="left:1763px;top:841px;font-size:15.5px;transform:scaleX(1.0548)">6224</div>
<div class="a" style="left:1894px;top:72px;width:1px;height:793px;background:#e4e4e4"></div>
<div class="a" style="left:1896px;top:48px;width:22px;height:820px;background:#f5f5f5;border-radius:11px"></div>
<svg class="a" style="left:1896px;top:48px" width="22" height="820"><polygon points="11.5,6.5 16.5,13.5 6.5,13.5" fill="#6e6e6e" stroke="#6e6e6e" stroke-width="1.2" stroke-linejoin="round"/><rect x="6" y="21" width="11" height="21" rx="5.5" fill="#6e6e6e"/><polygon points="6.5,805.5 16.5,805.5 11.5,813" fill="#6e6e6e" stroke="#6e6e6e" stroke-width="1.2" stroke-linejoin="round"/></svg>
<div class="a" style="left:0;top:864px;width:1894px;height:1px;background:#e8efe4"></div>
<div class="a" style="left:-10px;top:865px;width:151px;height:40px;background:#f0f0f0;border:1px solid #dedede;border-radius:0 5px 0 0"></div>
<div class="a" style="left:323px;top:865px;width:1700px;height:40px;background:#f0f0f0;border:1px solid #dedede;border-radius:5px 0 0 0"></div>
<div class="a" style="left:141px;top:864px;width:182px;height:40px;background:#fff"></div>
<svg class="a" style="left:28px;top:874px" width="60" height="20"><polyline points="11,4 5,10 11,16" fill="none" stroke="#959595" stroke-width="1.2"/><polyline points="45,4 51,10 45,16" fill="none" stroke="#959595" stroke-width="1.2"/></svg>
<div class="a" style="left:152px;top:872px;font-size:17.5px;line-height:22px;color:#242424;transform-origin:0 0;transform:scaleX(1.025)">Nagelstudio’s België</div>
<div class="a" style="left:151px;top:895px;width:162px;height:2px;background:#107c41;border-radius:1px"></div>
<div class="a" style="left:328px;top:873px;width:1px;height:24px;background:#d0d0d0"></div>
<svg class="a" style="left:378px;top:874px" width="20" height="20"><path d="M10 3 V17 M3 10 H17" stroke="#3a3a3a" stroke-width="1.4"/></svg>
<div class="a" style="left:1154px;top:879px;width:3px;height:3px;background:#2e2e2e"></div>
<div class="a" style="left:1154px;top:884px;width:3px;height:3px;background:#2e2e2e"></div>
<div class="a" style="left:1154px;top:889px;width:3px;height:3px;background:#2e2e2e"></div>
<div class="a" style="left:1176px;top:874px;width:721px;height:21px;background:#f5f5f5;border-radius:10.5px"></div>
<svg class="a" style="left:1176px;top:874px" width="721" height="21"><polygon points="6.5,10.5 14,5.5 14,15.5" fill="#6e6e6e" stroke="#6e6e6e" stroke-width="1.2" stroke-linejoin="round"/><rect x="21" y="5" width="393" height="11" rx="5.5" fill="#6e6e6e"/><polygon points="714.5,10.5 707,5.5 707,15.5" fill="#6e6e6e" stroke="#6e6e6e" stroke-width="1.2" stroke-linejoin="round"/></svg>
</body></html>
